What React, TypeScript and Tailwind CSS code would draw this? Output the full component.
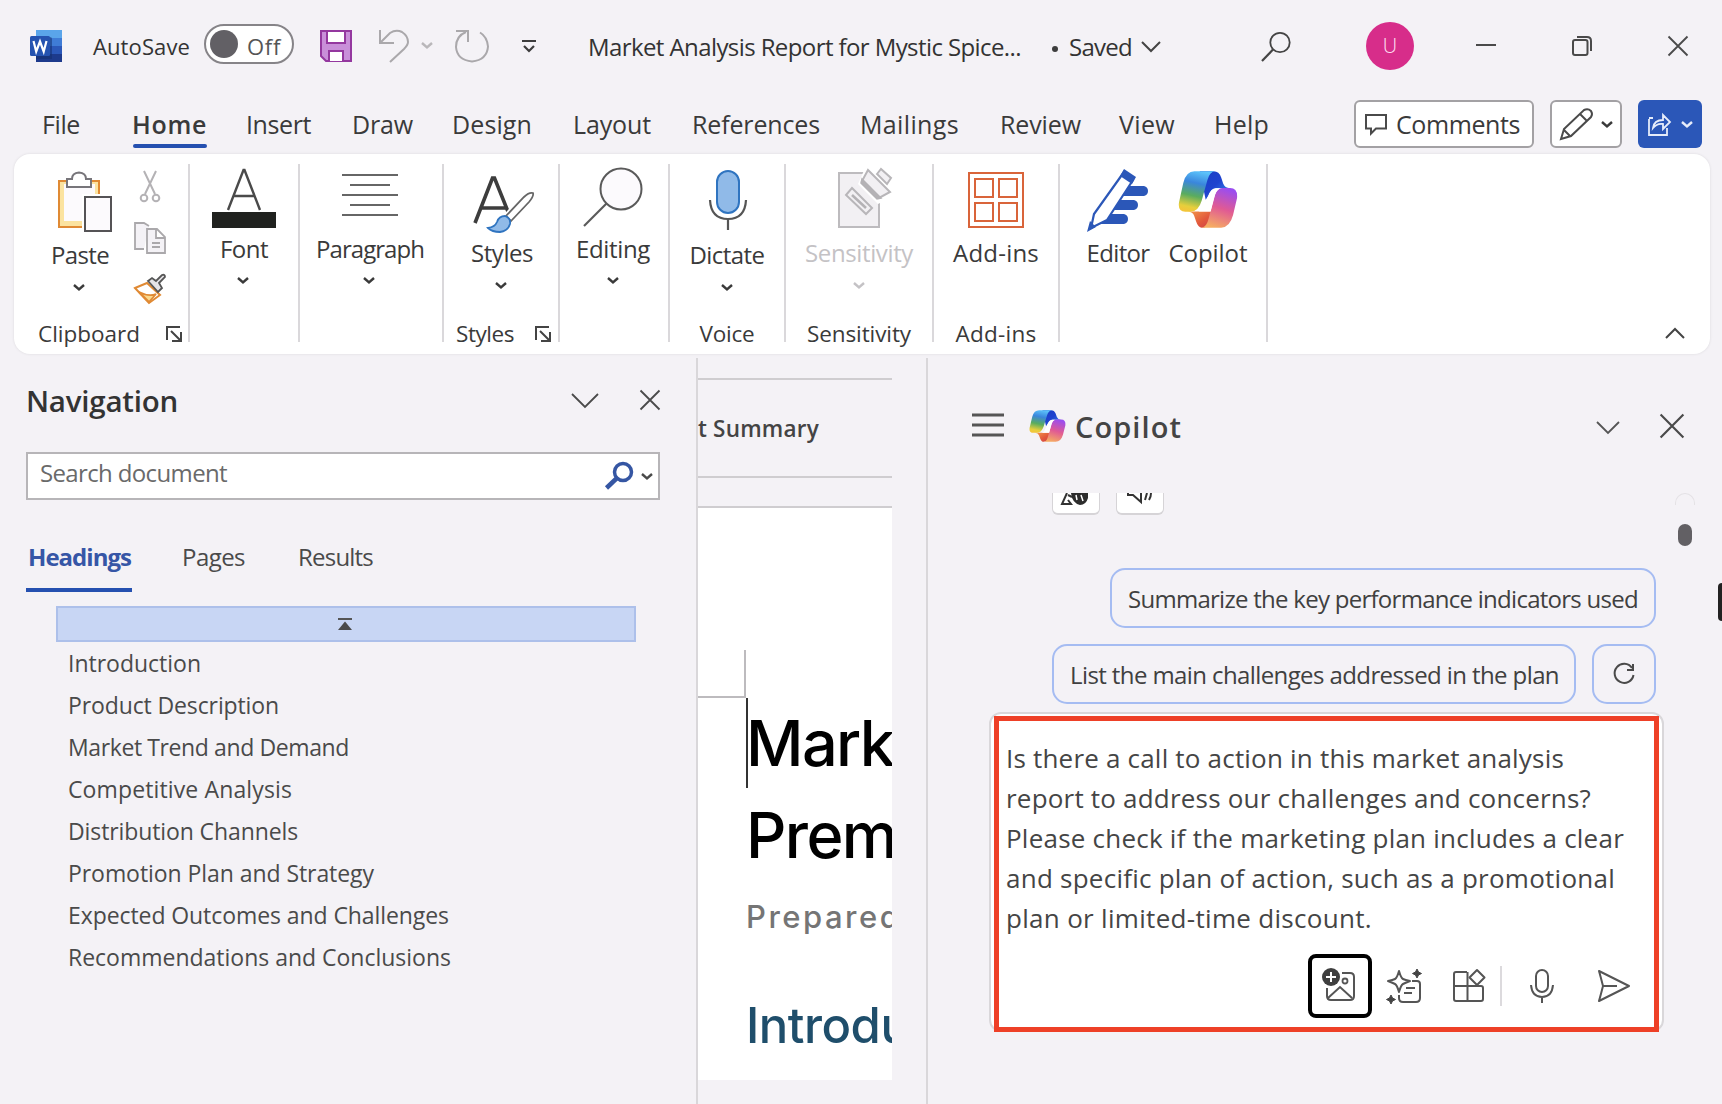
import { useLayoutEffect, useRef, useState, type ReactNode } from "react";

/** A single-line label whose tracking is adjusted so its glyphs span `w` pixels. */
function T({ w, className = "", children }: { w: number; className?: string; children: string }) {
  const ref = useRef<HTMLSpanElement>(null);
  const [spacing, setSpacing] = useState(0);
  useLayoutEffect(() => {
    const el = ref.current;
    if (!el) return;
    el.style.letterSpacing = "0px";
    const natural = el.getBoundingClientRect().width;
    const next = (w + 2 - natural) / children.length;
    el.style.letterSpacing = next + "px";
    setSpacing(next);
  }, [w, children]);
  return (
    <span className={"flex shrink-0 " + className}>
      <span ref={ref} style={{ letterSpacing: spacing }} className="-mx-px shrink-0 whitespace-nowrap">
        {children}
      </span>
    </span>
  );
}

function Icon({ box, className = "", children }: { box: string; className?: string; children: ReactNode }) {
  return (
    <svg viewBox={box} fill="none" className={"block shrink-0 overflow-visible " + className}>
      {children}
    </svg>
  );
}

function Chevron({ className = "" }: { className?: string }) {
  return (
    <Icon box="0 0 12 7" className={"h-[7px] w-3 " + className}>
      <path d="M1 1l5 4.500L11 1" stroke="currentColor" strokeWidth="2.4" />
    </Icon>
  );
}

function Cross({ className = "" }: { className?: string }) {
  return (
    <Icon box="0 0 20 20" className={className}>
      <path d="M0.500 0.500l19 19M19.500 0.500l-19 19" stroke="#4a4a4a" strokeWidth="1.8" />
    </Icon>
  );
}

function CopilotLogo({ id, className = "" }: { id: string; className?: string }) {
  return (
    <svg viewBox="984 65 182 168" preserveAspectRatio="none" className={"block shrink-0 " + className}>
      <defs>
        <linearGradient id={id + "a"} x1="0.6" y1="0" x2="0.4" y2="1">
          <stop offset="0" stopColor="#5cc4fb" />
          <stop offset="0.3" stopColor="#3a86dc" />
          <stop offset="0.62" stopColor="#5aac5e" />
          <stop offset="0.9" stopColor="#e6cf3c" />
          <stop offset="1" stopColor="#f2c63a" />
        </linearGradient>
        <linearGradient id={id + "b"} x1="0" y1="0" x2="1" y2="1">
          <stop offset="0" stopColor="#1a3fc4" />
          <stop offset="0.5" stopColor="#1f43cf" />
          <stop offset="1" stopColor="#3f9bf2" />
        </linearGradient>
        <linearGradient id={id + "c"} x1="0.65" y1="0" x2="0.35" y2="1">
          <stop offset="0" stopColor="#9a4df0" />
          <stop offset="0.5" stopColor="#e05a94" />
          <stop offset="1" stopColor="#f6ac62" />
        </linearGradient>
        <linearGradient id={id + "d"} x1="0" y1="0" x2="1" y2="1">
          <stop offset="0" stopColor="#f39a4a" />
          <stop offset="0.6" stopColor="#e2583c" />
          <stop offset="1" stopColor="#cf4148" />
        </linearGradient>
      </defs>
      <path d="M1050 66H1092Q1109 66 1115 84L1121 102Q1126 115 1142 116H1098Q1084 117 1078 135L1068 150Z" fill={`url(#${id}b)`} />
      <path d="M1014 184H1084L1084 215Q1072 232 1056 232Q1045 232 1039 214L1033 197Q1029 185 1014 184Z" fill={`url(#${id}d)`} />
      <path d="M1034 66H1096Q1080 68 1073 92L1056 152Q1046 185 1022 185H1006Q983 185 987 158L1000 100Q1009 66 1034 66Z" fill={`url(#${id}a)`} />
      <path d="M1118 115H1142Q1166 115 1163 145L1151 195Q1141 232 1115 232H1056Q1071 230 1077 205L1092 148Q1100 115 1118 115Z" fill={`url(#${id}c)`} />
      <path d="M1100 116Q1084 118 1076 137L1058 178L1046 184H1083L1093 148Q1098 122 1112 116Z" fill="#fff" />
    </svg>
  );
}

function TitleBar() {
  return (
    <header className="flex h-[92px] items-center text-[#333]">
      <Icon box="30 30 32 32" className="ml-[30px] h-8 w-8">
        <path d="M36 30h26v8H36z" fill="#5aa5ea" />
        <path d="M36 38h26v8H36z" fill="#3f7cd6" />
        <path d="M36 46h26v8H36z" fill="#2b58b9" />
        <path d="M36 54h26v8H36z" fill="#1d3a8c" />
        <path d="M36 37h14q2 0 2 2v20H36z" fill="#14306e" opacity="0.55" />
        <rect x="30" y="36" width="20" height="20" rx="1.5" fill="#2553b0" />
        <path d="M33.500 41l2.700 10.500L40 41.500l3.700 10L46.500 41" stroke="#fff" strokeWidth="2.2" />
      </Icon>
      <T w={95} className="ml-8 text-[22px] leading-8">AutoSave</T>
      <div className="ml-[15px] flex h-10 w-[90px] -translate-y-0.5 items-center rounded-full border-2 border-[#868488] bg-white">
        <span className="ml-1 h-7 w-7 rounded-full bg-[#626065]" />
        <T w={32} className="ml-[10px] translate-y-[2px] text-[22px] leading-8 text-[#555]">Off</T>
      </div>
      <Icon box="320 30 32 32" className="ml-[26px] h-8 w-8">
        <path d="M321 31h30v30h-25l-5-5z" fill="#c98fd9" stroke="#94389f" strokeWidth="2" />
        <path d="M327 31h18v12h-18zM329 61V51h14v10" fill="#fff" stroke="#94389f" strokeWidth="2" />
      </Icon>
      <Icon box="379 30 30 32" className="ml-[27px] h-8 w-[30px] text-[#aaa8ab]">
        <path d="M380 30v13h14M381 42l9-9q6-4 12-1 6 4 6 10 0 3-4 7l-14 13" stroke="currentColor" strokeWidth="2" />
      </Icon>
      <Chevron className="ml-3 -translate-y-px text-[#b9b7ba]" />
      <Icon box="455 30 34 32" className="ml-[22px] h-8 w-[34px] text-[#aaa8ab]">
        <path d="M456 31h12v11M466 32q-10 4-10 15 1 13 16 14.500 15-1.500 16-15-1-10-8-14" stroke="currentColor" strokeWidth="2" />
      </Icon>
      <Icon box="522 40 14 12" className="ml-[33px] h-3 w-3.5">
        <path d="M522 41h14M524 46l5 5 5-5" stroke="#3d3d3d" strokeWidth="2.2" />
      </Icon>
      <T w={431} className="ml-[53px] translate-y-[1px] text-[24px] leading-8">Market Analysis Report for Mystic Spice...</T>
      <span className="ml-8 h-1.5 w-1.5 translate-y-[3px] rounded-full bg-[#3d3d3d]" />
      <T w={61} className="ml-3 translate-y-[1px] text-[24px] leading-8">Saved</T>
      <Icon box="0 0 20 11" className="ml-[10px] h-[11px] w-5">
        <path d="M1 1l9 9 9-9" stroke="#444" strokeWidth="2" />
      </Icon>
      <Icon box="1262 31 28 29" className="ml-[101px] h-[29px] w-7">
        <circle cx="1280" cy="41.500" r="9.700" stroke="#444" strokeWidth="1.8" />
        <path d="M1273 48.500L1262 60" stroke="#444" strokeWidth="2.2" />
      </Icon>
      <div className="ml-[76px] flex h-12 w-12 items-center justify-center rounded-full bg-[#d72d8a] text-[20px] font-light text-[#ffe3f6]">U</div>
      <span className="ml-[62px] h-0.5 w-5 -translate-y-px bg-[#4a4a4a]" />
      <Icon box="1571 36 21 20" className="ml-[75px] h-5 w-[21px]">
        <rect x="1573" y="40" width="14.500" height="15" rx="2" stroke="#4a4a4a" strokeWidth="2" />
        <path d="M1577 37h10q4 0 4 4v10" stroke="#4a4a4a" strokeWidth="2" />
      </Icon>
      <Cross className="ml-[76px] h-5 w-5" />
    </header>
  );
}

function MenuBar() {
  const tab = "text-[25px] leading-8 ";
  return (
    <nav className="flex h-[62px] items-center pt-[2px] text-[#3a3a3a]">
      <T w={36} className={tab + "ml-[43px]"}>File</T>
      <div className="ml-[54px] flex w-[74px] flex-col">
        <T w={73} className="mt-[7px] text-[25px] font-semibold leading-8">Home</T>
        <span className="mt-[4px] h-1 rounded-sm bg-[#2550b0]" />
      </div>
      <T w={63} className={tab + "ml-[40px]"}>Insert</T>
      <T w={59} className={tab + "ml-[43px]"}>Draw</T>
      <T w={78} className={tab + "ml-[41px]"}>Design</T>
      <T w={76} className={tab + "ml-[43px]"}>Layout</T>
      <T w={126} className={tab + "ml-[43px]"}>References</T>
      <T w={97} className={tab + "ml-[42px]"}>Mailings</T>
      <T w={79} className={tab + "ml-[43px]"}>Review</T>
      <T w={54} className={tab + "ml-[40px]"}>View</T>
      <T w={53} className={tab + "ml-[41px]"}>Help</T>
      <div className="ml-[86px] flex h-12 w-[180px] items-center rounded-md border-2 border-[#a3a1a4] bg-white">
        <Icon box="1365 114 22 20" className="ml-[9px] h-5 w-[22px]">
          <path d="M1366 115h20v13.500h-10l-5 5v-5h-5z" stroke="#4a4a4a" strokeWidth="2" />
        </Icon>
        <T w={122} className="ml-[10px] text-[25px] leading-8">Comments</T>
      </div>
      <div className="ml-4 flex h-12 w-[72px] items-center rounded-md border-2 border-[#a3a1a4] bg-white">
        <Icon box="1560 108 33 32" className="ml-2 h-8 w-[33px]">
          <path d="M1561 139l3-10 20-19q4-2 7 1 2 3 0 6l-20 19-10 3zM1580 114l7 7M1564 130l6 6" stroke="#4a4a4a" strokeWidth="2" />
        </Icon>
        <Chevron className="ml-2" />
      </div>
      <div className="ml-4 flex h-12 w-16 items-center rounded-md bg-[#2b57b8] text-[#e6ecfa]">
        <Icon box="1648 114 23 23" className="ml-[10px] h-[23px] w-[23px]">
          <path d="M1649 120v16h18v-7M1653 119h-4M1653 129q1-8 10-8v-5l7 7-7 7v-5q-6-1-10 4z" stroke="currentColor" strokeWidth="1.8" />
        </Icon>
        <Chevron className="ml-[10px]" />
      </div>
    </nav>
  );
}

function Group({ className, children }: { className: string; children: ReactNode }) {
  return <section className={"flex h-[178px] shrink-0 flex-col items-center border-r-2 border-[#dad8db] " + className}>{children}</section>;
}

function Launcher({ className = "" }: { className?: string }) {
  return (
    <Icon box="0 0 16 16" className={"h-4 w-4 " + className}>
      <path d="M1 14V1h13M5 5l9 9M15 6v9H6" stroke="#444" strokeWidth="2" />
    </Icon>
  );
}

function Ribbon() {
  const text = "text-[24px] leading-6 ";
  const label = "translate-y-px text-[22.5px] leading-[18px] ";
  return (
    <div className="ml-3.5 flex h-[200px] w-[1696px] rounded-[16px] bg-white pt-2.5 text-[#3a3a3a] shadow-[0_0_3px_rgba(0,0,0,0.1)]">
      <Group className="w-[176px]">
        <div className="flex h-[160px] w-full">
          <div className="ml-[34px] flex w-16 flex-col items-center pt-2">
            <Icon box="48 172 64 60" className="h-[60px] w-16">
              <path d="M59 181h40v46H59z" fill="#fbe3a0" stroke="#e08a34" strokeWidth="2" />
              <path d="M64 184h31v37H64z" fill="#fcfafd" />
              <path d="M67 179h5q0-6 7-6.500 7 .5 7 6.500h5v8H67z" fill="#fff" stroke="#77757a" strokeWidth="2" />
              <path d="M82 194h31v40H82z" fill="#fff" />
              <path d="M85 197h26v34H85z" fill="#fcfafd" stroke="#555356" strokeWidth="2" />
            </Icon>
            <T w={56} className={text + "mt-[11px]"}>Paste</T>
            <Chevron className="mt-[17px] -translate-x-px" />
          </div>
          <div className="ml-[22px] flex w-8 flex-col items-center pt-1.5">
            <Icon box="134 170 32 32" className="h-8 w-8">
              <path d="M144 171l11 23M156 171l-11 23" stroke="#b4b2b5" strokeWidth="2" />
              <circle cx="144" cy="198" r="3.300" stroke="#b4b2b5" strokeWidth="2" />
              <circle cx="156" cy="198" r="3.300" stroke="#b4b2b5" strokeWidth="2" />
            </Icon>
            <Icon box="134 222 32 32" className="mt-5 h-8 w-8">
              <path d="M144 249h-9v-26h9l5 3" fill="#f4f2f6" stroke="#aaa8ab" strokeWidth="1.8" />
              <path d="M147 229h10l8 8v16h-18zM156 229v9h9M152 243h8M152 247h8" fill="#f4f2f6" stroke="#aaa8ab" strokeWidth="1.8" />
            </Icon>
            <Icon box="134 274 32 31" className="mt-5 h-[31px] w-8">
              <path d="M135 288l12-5 13 12-11 8z" fill="#fff" stroke="#e08a34" strokeWidth="2" />
              <path d="M139 292q10 5 17 2l-7 8z" fill="#fbd98c" stroke="#e08a34" strokeWidth="1.8" />
              <path d="M148 281l4-3 4 3 6-6q3-1 3 2l-6 6 3 5-4 4z" fill="#e6e4e7" stroke="#555" strokeWidth="1.8" />
            </Icon>
          </div>
        </div>
        <div className="flex w-full items-end">
          <T w={100} className={label + "ml-[25px]"}>Clipboard</T>
          <Launcher className="ml-[27px]" />
        </div>
      </Group>

      <Group className="w-[110px] pt-1">
        <Icon box="212 168 64 60" className="h-[60px] w-16">
          <path d="M228 210l15.500-40h1L260 210M233 196h22" stroke="#4a4a4a" strokeWidth="2.4" />
          <path d="M212 212h64v16h-64z" fill="#20221f" />
        </Icon>
        <T w={46} className={text + "mt-[9px]"}>Font</T>
        <Chevron className="mt-4 -translate-x-px" />
      </Group>

      <Group className="w-36 pt-1">
        <Icon box="340 168 64 60" className="h-[60px] w-16">
          <path d="M343 175h56M351 185h40M343 195h56M351 205h40M343 215h56" stroke="#666" strokeWidth="2" />
        </Icon>
        <T w={106} className={text + "mt-[9px] -translate-x-px"}>Paragraph</T>
        <Chevron className="mt-4 -translate-x-0.5" />
      </Group>

      <Group className="w-[116px] pt-2">
        <div className="flex h-[152px] flex-col items-center">
          <Icon box="470 172 64 60" className="h-[60px] w-16">
            <path d="M476 223l17.500-45h2L510 214M483 208h25" stroke="#3d3d3d" strokeWidth="3.6" />
            <path d="M534 192q-4-1-9 4l-18 20 5 5 18-19q5-6 4-10z" fill="#fff" stroke="#fff" strokeWidth="5" />
            <path d="M534 193q-4-1-9 4l-18 19 5 5 18-19q5-6 4-9z" fill="#fff" stroke="#666" strokeWidth="1.8" />
            <path d="M489 228q7-1 9-6 2-6 8-6 6 2 5 8-2 7-10 8-8 0-12-4z" fill="#90bae8" stroke="#2f74c0" strokeWidth="1.8" />
          </Icon>
          <T w={60} className={text + "mt-[9px] translate-x-px"}>Styles</T>
          <Chevron className="mt-[17px]" />
        </div>
        <div className="flex w-full items-end">
          <T w={56} className={label + "ml-[13px]"}>Styles</T>
          <Launcher className="ml-[22px]" />
        </div>
      </Group>

      <Group className="w-[110px] pt-1">
        <Icon box="582 168 64 60" className="h-[60px] w-16">
          <circle cx="621" cy="189" r="20.500" fill="#fcfafd" stroke="#5a5a5a" strokeWidth="2" />
          <path d="M606.500 203.500L584 226" stroke="#5a5a5a" strokeWidth="2.2" />
        </Icon>
        <T w={72} className={text + "mt-[9px] -translate-x-px"}>Editing</T>
        <Chevron className="mt-4 -translate-x-px" />
      </Group>

      <Group className="w-[116px] pt-2">
        <div className="flex h-[152px] flex-col items-center">
          <Icon box="695 172 64 60" className="h-[60px] w-16">
            <rect x="717" y="171" width="22" height="42" rx="11" fill="#90bae8" stroke="#2f74c0" strokeWidth="2" />
            <path d="M710 200q1 19 18 19t18-19M728 219v11" stroke="#555" strokeWidth="2.2" />
          </Icon>
          <T w={73} className={text + "mt-[11px]"}>Dictate</T>
          <Chevron className="mt-[17px]" />
        </div>
        <T w={53} className={label}>Voice</T>
      </Group>

      <Group className="w-[148px] pt-2">
        <div className="flex h-[152px] flex-col items-center">
          <Icon box="827 172 64 60" className="h-[60px] w-16">
            <path d="M839 173h40v54h-40z" fill="#f2f0f3" stroke="#bdbbbe" strokeWidth="2" />
            <path d="M866 166h14l6 6 8 10-8 18-8 4-20-20z" fill="#fff" />
            <path d="M868 170l22 22-11 6-17-17z" fill="#f2f0f3" stroke="#b8b6b9" strokeWidth="2" />
            <path d="M862 179l19 19-4 1-16-16z" fill="#b4b2b5" stroke="#b4b2b5" strokeWidth="1.500" />
            <path d="M877 174l4-5 10 9-4 6z" fill="#f2f0f3" stroke="#b8b6b9" strokeWidth="2" />
            <path d="M852 188l20 20-6 6-20-19z" fill="#f2f0f3" stroke="#b8b6b9" strokeWidth="2" />
            <path d="M852 195l14 13" stroke="#b4b2b5" strokeWidth="2.500" />
          </Icon>
          <T w={106} className={text + "mt-[9px] text-[#c4c2c5]"}>Sensitivity</T>
          <Chevron className="mt-[17px] text-[#c4c2c5]" />
        </div>
        <T w={102} className={label}>Sensitivity</T>
      </Group>

      <Group className="w-[126px] pt-2">
        <div className="flex h-[152px] flex-col items-center">
          <Icon box="964 172 64 60" className="h-[60px] w-16">
            <path d="M969 173h54v54h-54zM975 179h18v18h-18zM999 179h18v18h-18zM975 203h18v18h-18zM999 203h18v18h-18z" stroke="#d9643a" strokeWidth="2" />
          </Icon>
          <T w={84} className={text + "mt-[9px]"}>Add-ins</T>
        </div>
        <T w={79} className={label}>Add-ins</T>
      </Group>

      <Group className="w-[208px] pt-1">
        <div className="flex w-full">
          <div className="ml-[26px] flex w-16 flex-col items-center">
            <Icon box="1086 168 64 64" className="h-16 w-16">
              <path d="M1118 186h26q4 1 4 5t-4 5h-26zM1108 200h26q4 1 4 5t-4 5h-26zM1098 214h26q4 1 4 5t-4 5h-26z" fill="#2b57b8" />
              <path d="M1124 172l9 8-26 40-16 8 3-14z" fill="#fff" stroke="#2b57b8" strokeWidth="2.2" />
              <path d="M1124 169l12 8-4 7-12-8zM1087 232l3-11 6 6z" fill="#2b57b8" />
            </Icon>
            <T w={61} className={text + "mt-[9px]"}>Editor</T>
          </div>
          <div className="ml-[26px] flex w-16 flex-col items-center">
            <CopilotLogo id="ribbon" className="mt-[3px] h-[57px] w-[60px]" />
            <T w={77} className={text + "mt-[13px]"}>Copilot</T>
          </div>
        </div>
      </Group>

      <Icon box="0 0 20 11" className="mb-[15px] ml-[397px] h-[11px] w-5 self-end">
        <path d="M1 10l9-9 9 9" stroke="#444" strokeWidth="2" />
      </Icon>
    </div>
  );
}

const headings: [string, number][] = [
  ["Introduction", 131],
  ["Product Description", 209],
  ["Market Trend and Demand", 279],
  ["Competitive Analysis", 222],
  ["Distribution Channels", 228],
  ["Promotion Plan and Strategy", 304],
  ["Expected Outcomes and Challenges", 379],
  ["Recommendations and Conclusions", 381],
];

function NavigationPane() {
  return (
    <aside className="mt-1 flex w-[698px] shrink-0 flex-col border-r-2 border-[#d9d7da] pl-[26px]">
      <div className="mt-[22px] flex h-10 items-center">
        <T w={150} className="ml-[1px] translate-y-px text-[29.500px] font-semibold text-[#333]">Navigation</T>
        <Icon box="0 0 28 15" className="ml-[394px] h-[15px] w-7">
          <path d="M1 1l13 13L27 1" stroke="#4a4a4a" strokeWidth="1.8" />
        </Icon>
        <Cross className="ml-[41px] h-5 w-5" />
      </div>
      <div className="mt-[32px] flex h-12 w-[634px] items-center border-2 border-[#b7b5b8] bg-white">
        <T w={185} className="ml-[13px] -translate-y-[3px] text-[24px] leading-8 text-[#6a6a6a]">Search document</T>
        <Icon box="606 461 28 27" className="ml-[379px] h-[27px] w-7 -translate-y-px">
          <circle cx="624" cy="471" r="8.500" stroke="#3556a3" strokeWidth="3.500" />
          <path d="M618 477l-10.500 10" stroke="#3556a3" strokeWidth="4.500" />
        </Icon>
        <Chevron className="ml-2 text-[#4a4a4a]" />
      </div>
      <div className="mt-[39px] flex h-[53px] text-[24px] leading-8 text-[#4a4a4a]">
        <div className="flex w-[106px] flex-col border-b-4 border-[#2550b0]">
          <T w={101} className="ml-[3px] mt-[2px] font-bold text-[#3656a6]">Headings</T>
        </div>
        <T w={61} className="ml-[51px] mt-[2px]">Pages</T>
        <T w={73} className="ml-[55px] mt-[2px]">Results</T>
      </div>
      <div className="ml-[30px] mt-[14px] flex h-9 w-[580px] items-center justify-center border-2 border-[#adc0ea] bg-[#c8d6f4]">
        <Icon box="0 0 14 12" className="h-3 w-3.5 -translate-x-px">
          <path d="M0 1h14" stroke="#555" strokeWidth="2" />
          <path d="M7 3.500L14 12H0z" fill="#4a4a4a" />
        </Icon>
      </div>
      <ul className="ml-[43px] text-[23px] text-[#4a4a4a]">
        {headings.map(([name, w]) => (
          <li key={name} className="flex h-[42px] items-center">
            <T w={w}>{name}</T>
          </li>
        ))}
      </ul>
    </aside>
  );
}

function DocumentPane() {
  return (
    <main className="w-[194px] shrink-0 overflow-hidden">
      <div className="mt-6 flex h-[100px] items-center justify-end overflow-hidden border-y-2 border-[#cfcdd0] pr-[74px]">
        <T w={133} className="translate-y-px text-[22.500px] font-semibold text-[#444]">ot Summary</T>
      </div>
      <div className="mt-7 h-[574px] border-t-2 border-[#cfcdd0] bg-white">
        <div className="mt-[142px] h-[48px] w-[48px] border-b-2 border-r-2 border-[#bdbbbe]" />
        <div className="flex flex-col whitespace-nowrap pl-[52px]">
          <div className="-ml-[4px] flex h-[90px] items-start">
            <span className="h-[90px] w-0.5 shrink-0 bg-[#333]" />
            <span className="-ml-0.5 -mt-0.5 font-['Inter'] text-[63px] leading-[94px] tracking-[-1.600px] text-black">Market</span>
          </div>
          <span className="-ml-1 font-['Inter'] text-[63px] leading-[94px] tracking-[-1.600px] text-black">Premium</span>
          <span className="-ml-[4px] mt-[10px] font-['Inter'] text-[31px] font-medium leading-[50px] tracking-[2.500px] text-[#757575]">Prepared</span>
          <span className="-ml-[4px] mt-[52px] font-['Inter'] text-[49px] leading-[64px] tracking-[-0.500px] text-[#1f4e6b]">Introduction</span>
        </div>
      </div>
    </main>
  );
}

const promptLines: [string, number][] = [
  ["Is there a call to action in this market analysis", 556],
  ["report to address our challenges and concerns?", 583],
  ["Please check if the marketing plan includes a clear", 616],
  ["and specific plan of action, such as a promotional", 607],
  ["plan or limited-time discount.", 364],
];

function CopilotPane() {
  const pill = "flex h-[60px] items-center rounded-[15px] border-2 border-[#a5bcf2] text-[24px] text-[#404040] ";
  return (
    <aside className="ml-[34px] mt-1 flex w-[796px] shrink-0 flex-col border-l-2 border-[#d9d7da]">
      <div className="mt-[46px] flex h-10 items-center">
        <Icon box="0 0 32 24" className="ml-11 h-6 w-8 translate-y-px">
          <path d="M0 2h32M0 12h32M0 22h32" stroke="#555" strokeWidth="2.800" />
        </Icon>
        <CopilotLogo id="pane" className="ml-[25px] h-8 w-[37px] translate-y-0.5" />
        <T w={105} className="ml-[10px] translate-y-[3px] text-[29px] font-semibold text-[#444]">Copilot</T>
        <Icon box="0 0 24 13" className="ml-[415px] h-[13px] w-6 translate-y-[3px]">
          <path d="M1 1l11 11L23 1" stroke="#555" strokeWidth="1.8" />
        </Icon>
        <Cross className="ml-[40px] h-6 w-6 translate-y-0.5" />
      </div>

      <div className="mt-[49px] flex h-[54px] overflow-hidden">
        <div className="ml-[124px] flex h-[22px] w-12 justify-center rounded-b-md border-x border-b-2 border-[#d6d4d7] bg-white">
          <Icon box="1062 493 30 14" className="h-3.5 w-[30px]">
            <path d="M1068 493l-5 11h9l-3-4M1069 495l4 2" stroke="#333" strokeWidth="2" />
            <path d="M1072 493h17v5q-2 7-8 7-8-2-9-12z" fill="#2c2c2c" />
            <path d="M1077 495l1 5M1082 495l2 6" stroke="#fff" strokeWidth="1.500" />
          </Icon>
        </div>
        <div className="ml-4 flex h-[22px] w-12 justify-center rounded-b-md border-x border-b-2 border-[#d6d4d7] bg-white">
          <Icon box="1127 493 26 12" className="h-3 w-[26px]">
            <path d="M1128 493v2h5l8 7v-9M1145 500l2-7M1149 500q2-3 2-7" stroke="#333" strokeWidth="2" />
          </Icon>
        </div>
        <div className="ml-[511px] flex w-5 flex-col items-center">
          <span className="h-3 w-5 rounded-t-full border-x border-t border-[#e4e2e5]" />
          <span className="mt-[19px] h-[22px] w-3.5 rounded-full bg-[#626064]" />
        </div>
      </div>

      <div className="mt-[21px] flex items-center">
        <div className={pill + "ml-[182px] w-[546px]"}>
          <T w={508} className="ml-[17px] translate-y-px">Summarize the key performance indicators used</T>
        </div>
        <span className="ml-[62px] h-[38px] w-1 translate-y-1 rounded-l-sm bg-[#222]" />
      </div>
      <div className="mt-4 flex">
        <div className={pill + "ml-[124px] w-[524px]"}>
          <T w={487} className="ml-[17px] translate-y-px">List the main challenges addressed in the plan</T>
        </div>
        <div className={pill + "ml-4 w-16 justify-center"}>
          <Icon box="0 0 22 22" className="h-[22px] w-[22px]">
            <path d="M19 5A9.500 9.500 0 1 0 20.500 12M20 1v6h-6" stroke="#4a4a4a" strokeWidth="2" />
          </Icon>
        </div>
      </div>

      <div className="ml-[61px] mt-2 flex h-[320px] w-[675px] flex-col rounded-[12px] border-2 border-[#d9d7da] bg-white px-[3px] pt-0.5">
        <div className="flex h-[316px] w-[665px] shrink-0 flex-col border-[5px] border-[#ee4027] bg-white">
          <div className="ml-[8px] mt-[17px] text-[26px] leading-10 text-[#454545]">
            {promptLines.map(([line, w]) => (
              <p key={line} className="flex h-10">
                <T w={w}>{line}</T>
              </p>
            ))}
          </div>
          <div className="mt-[16px] flex items-center">
            <div className="ml-[309px] flex h-16 w-16 items-center justify-center rounded-lg border-4 border-black">
              <Icon box="1323 969 34 34" className="h-[34px] w-[34px]">
                <path d="M1342 973h8q4 0 4 4v19q0 4-4 4h-19q-4 0-4-4v-8M1328 998l12-11 12 11" stroke="#555" strokeWidth="2" />
                <circle cx="1345" cy="981" r="2.500" stroke="#555" strokeWidth="1.8" />
                <circle cx="1331" cy="977" r="9" fill="#3f3f3f" />
                <path d="M1331 972v10M1326 977h10" stroke="#fff" strokeWidth="2" />
              </Icon>
            </div>
            <Icon box="1387 969 34 34" className="ml-[15px] h-[34px] w-[34px]">
              <path d="M1412 981h5q3 0 3 3v14q0 4-4 4h-13q-4 0-4-4v-3M1406 988h9M1404 993h8" stroke="#555" strokeWidth="2" />
              <path d="M1399 971q2 7 4 8t7 2q-5 2-7 3t-4 8q-2-7-4-8t-7-3q5-1 7-2t4-8z" fill="#fff" stroke="#555" strokeWidth="2" strokeLinejoin="round" />
              <path d="M1417 969l1.500 3 3 1.500-3 1.500-1.500 3-1.500-3-3-1.500 3-1.500zM1391 995l1.500 3 3 1.500-3 1.500-1.500 3-1.500-3-3-1.500 3-1.500z" fill="#444" stroke="#444" />
            </Icon>
            <Icon box="1452 969 34 34" className="ml-[31px] h-[34px] w-[34px]">
              <path d="M1467 972h-11q-2 0-2 2v25q0 2 2 2h25q2 0 2-2v-11q0-2-2-2h-27M1467.500 972v29" stroke="#555" strokeWidth="2" />
              <path d="M1477 970l7.500 7.500-7.500 7.500-7.500-7.500z" fill="#fff" stroke="#555" strokeWidth="2" strokeLinejoin="round" />
            </Icon>
            <span className="ml-[14px] h-10 w-0.5 bg-[#dcdadd]" />
            <Icon box="1530 969 24 34" className="ml-[28px] h-[34px] w-6">
              <rect x="1536" y="970" width="12" height="22" rx="6" stroke="#555" strokeWidth="2" />
              <path d="M1531 985q1 12 11 12t11-12M1542 997v6" stroke="#555" strokeWidth="2" />
            </Icon>
            <Icon box="1598 970 32 32" className="ml-11 h-8 w-8">
              <path d="M1599 971l30 15-30 15q2-7 4-15-2-8-4-15zM1603 986h14" stroke="#555" strokeWidth="2" strokeLinejoin="round" />
            </Icon>
          </div>
        </div>
      </div>
    </aside>
  );
}

export default function App() {
  return (
    <div className="h-[1104px] w-[1722px] overflow-hidden bg-[#f4f2f6] font-['Open_Sans',sans-serif] font-[450]">
      <TitleBar />
      <MenuBar />
      <Ribbon />
      <div className="flex h-[750px]">
        <NavigationPane />
        <DocumentPane />
        <CopilotPane />
      </div>
    </div>
  );
}
